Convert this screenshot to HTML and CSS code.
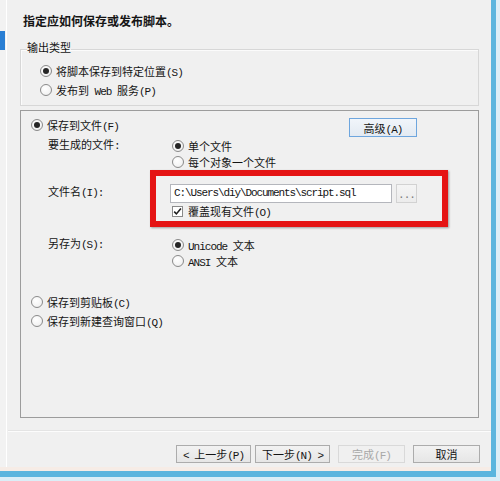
FILE: index.html
```html
<!DOCTYPE html>
<html lang="zh-CN">
<head>
<meta charset="utf-8">
<title>生成和发布脚本</title>
<link rel="stylesheet" href="styles.css">
</head>
<body>
<div class="screen">
  <div class="window">
    <div class="body">
      <div class="nav"><div class="nav-sel"></div></div>
      <div class="main">
        <div class="title">指定应如何保存或发布脚本。</div>
        <fieldset class="outtype">
          <legend>输出类型</legend>
          <div class="opt"><span class="radio on"></span><span>将脚本保存到特定位置<span class="h">(S)</span></span></div>
          <div class="opt"><span class="radio"></span><span>发布到<span class="h"> Web </span>服务<span class="h">(P)</span></span></div>
        </fieldset>
        <div class="panel">
          <div class="panel-head">
            <div class="opt"><span class="radio on"></span><span>保存到文件<span class="h">(F)</span></span></div>
            <button class="btn btn-default"><span>高级<span class="h">(A)</span></span></button>
          </div>
          <div class="frow g1">
            <div class="lbl">要生成的文件<span class="h">:</span></div>
            <div class="ctl">
              <div class="sub"><span class="radio on"></span><span>单个文件</span></div>
              <div class="sub"><span class="radio"></span><span>每个对象一个文件</span></div>
            </div>
          </div>
          <div class="frow g2">
            <div class="lbl tall">文件名<span class="h">(I):</span></div>
            <div class="ctl">
              <div class="filerow">
                <div class="textbox">C:\Users\diy\Documents\script.sql</div>
                <button class="btn browse">...</button>
              </div>
              <div class="sub"><span class="check"><svg width="9" height="9" viewBox="0 0 9 9"><path d="M1.2 4.6 L3.4 6.9 L7.9 1.6" fill="none" stroke="#1e1e1e" stroke-width="1.6"/></svg></span><span>覆盖现有文件<span class="h">(O)</span></span></div>
            </div>
          </div>
          <div class="frow g3">
            <div class="lbl">另存为<span class="h">(S):</span></div>
            <div class="ctl">
              <div class="sub"><span class="radio on"></span><span><span class="h">Unicode </span>文本</span></div>
              <div class="sub"><span class="radio"></span><span><span class="h">ANSI </span>文本</span></div>
            </div>
          </div>
          <div class="dest">
            <div class="opt"><span class="radio"></span><span>保存到剪贴板<span class="h">(C)</span></span></div>
            <div class="opt"><span class="radio"></span><span>保存到新建查询窗口<span class="h">(Q)</span></span></div>
          </div>
          <div class="highlight"></div>
        </div>
        <div class="sep"></div>
        <div class="footer">
          <button class="btn fbtn"><span><span class="h">&lt; </span>上一步<span class="h">(P)</span></span></button>
          <button class="btn fbtn next"><span>下一步<span class="h">(N) &gt;</span></span></button>
          <button class="btn fbtn sm disabled"><span>完成<span class="h">(F)</span></span></button>
          <button class="btn fbtn sm">取消</button>
        </div>
      </div>
    </div>
  </div>
</div>
</body>
</html>
```
FILE: styles.css
```css
html, body {
  margin: 0;
  padding: 0;
}
body {
  font-family: "Liberation Mono", "Noto Sans CJK SC", monospace;
  font-size: 11px;
  color: #141414;
  background: #dbeef7;
}
.h {
  letter-spacing: -1px;
}
.screen {
  width: 500px;
  height: 481px;
  background: #dbeef7;
}
.window {
  width: 496px;
  height: 477px;
  box-sizing: border-box;
  border-right: 5px solid #5bb5de;
  border-bottom: 6px solid #5bb5de;
  background: #f0f0f0;
}
.body {
  height: 471px;
  box-sizing: border-box;
  border-bottom: 4px solid #f6ece6;
  display: flex;
}
.nav {
  width: 6px;
  border-right: 1px solid #ffffff;
  padding-top: 31px;
  background: #f2f2f2;
}
.nav-sel {
  width: 5px;
  height: 19px;
  background: #2a7fd4;
}
.main {
  flex: 1;
  display: flex;
  flex-direction: column;
}
.title {
  margin: 14px 0 0 16px;
  font-family: "Noto Sans CJK SC", sans-serif;
  font-weight: bold;
  font-size: 12px;
  line-height: 14px;
  color: #151515;
}
.outtype {
  margin: 15px 0 0 13px;
  width: 459px;
  box-sizing: border-box;
  padding: 5px 6px 6px 6px;
  border: 1px solid #d7d7d7;
  box-shadow: inset 1px 1px 0 #fbfbfb;
  min-width: 0;
}
.outtype legend {
  padding: 0;
  line-height: 13px;
}
.outtype .opt {
  margin-left: 13px;
}
.opt {
  display: flex;
  align-items: center;
  height: 19px;
  white-space: nowrap;
}
.radio {
  width: 12px;
  height: 12px;
  box-sizing: border-box;
  border: 1px solid #8a8a8a;
  border-radius: 50%;
  background: radial-gradient(circle at 40% 35%, #ffffff 0%, #f4f4f4 60%, #e2e2e2 100%);
  margin-right: 4px;
  flex: none;
  display: flex;
  align-items: center;
  justify-content: center;
}
.radio.on::after {
  content: "";
  width: 6px;
  height: 6px;
  border-radius: 50%;
  background: #262626;
}
.panel {
  position: relative;
  margin: 4px 0 0 13px;
  width: 459px;
  height: 308px;
  box-sizing: border-box;
  border: 1px solid #9c9c9c;
  padding: 4px 0 0 10px;
}
.panel-head {
  display: flex;
  align-items: flex-start;
  height: 22px;
}
.btn {
  font-family: "Liberation Mono", "Noto Sans CJK SC", monospace;
  font-size: 11px;
  color: #141414;
  padding: 0;
  margin: 0;
  border: 1px solid #acacac;
  background: linear-gradient(#f2f2f2, #e6e6e6);
  box-sizing: border-box;
  display: flex;
  align-items: center;
  justify-content: center;
  white-space: nowrap;
}
.btn-default {
  margin: 3px 61px 0 auto;
  width: 68px;
  height: 19px;
  border-color: #6ea6de;
  background: linear-gradient(#f1f5fa, #e3eaf2);
}
.frow {
  display: flex;
  margin-left: 17px;
}
.g1 { margin-top: 1px; }
.g2 { margin-top: 14px; }
.g3 { margin-top: 18px; }
.lbl {
  width: 124px;
  line-height: 16px;
  height: 16px;
  white-space: nowrap;
}
.lbl.tall {
  line-height: 19px;
  height: 19px;
}
.sub {
  display: flex;
  align-items: center;
  height: 16px;
  white-space: nowrap;
}
.filerow {
  display: flex;
  margin-left: -2px;
}
.textbox {
  width: 222px;
  height: 19px;
  box-sizing: border-box;
  border: 1px solid #b4b6bc;
  background: #ffffff;
  padding-left: 3px;
  line-height: 17px;
  letter-spacing: -1.1px;
  white-space: nowrap;
  overflow: hidden;
}
.browse {
  margin-left: 4px;
  width: 21px;
  height: 19px;
  border-color: #d2d2d2;
  color: #7a7a7a;
  background: linear-gradient(#f4f4f4, #ececec);
  letter-spacing: -1px;
  align-items: flex-end;
  padding-bottom: 3px;
  line-height: 8px;
}
.check {
  width: 11px;
  height: 11px;
  box-sizing: border-box;
  border: 1px solid #8a8a8a;
  background: #ffffff;
  margin: 0 5px 0 0;
  display: flex;
  align-items: center;
  justify-content: center;
  flex: none;
}
.check svg {
  display: block;
}
.dest {
  margin-top: 23px;
}
.highlight {
  position: absolute;
  left: 129px;
  top: 59px;
  width: 298px;
  height: 57px;
  box-sizing: border-box;
  border: 6px solid #e51414;
  box-shadow: 1px 1px 2px rgba(0, 0, 0, 0.35);
  pointer-events: none;
}
.sep {
  margin-top: 12px;
  height: 1px;
  background: #fcfcfc;
  border-top: 1px solid #e4e4e4;
  margin-left: 1px;
}
.footer {
  display: flex;
  justify-content: flex-end;
  padding: 13px 11px 0 0;
}
.fbtn {
  width: 75px;
  height: 18px;
}
.fbtn.next {
  margin-left: 4px;
}
.fbtn.sm {
  width: 67px;
  margin-left: 8px;
}
.fbtn.disabled {
  border-color: #d9d9d9;
  color: #a8a8a8;
  background: #f0f0f0;
}
```
